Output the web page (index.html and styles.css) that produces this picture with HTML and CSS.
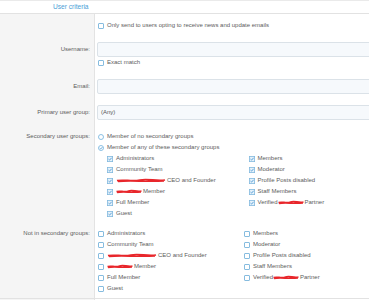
FILE: index.html
```html
<!DOCTYPE html>
<html lang="en">
<head>
    <meta charset="UTF-8">
    <title>User criteria</title>
    <link rel="stylesheet" href="styles.css">
</head>
<body>
<div class="page">
<div class="block">
    <h3 class="section-header">User criteria</h3>

    <!-- Newsletter opt-in -->
    <dl class="form-row">
        <dt></dt>
        <dd>
            <label class="check top"><span class="box"></span>Only send to users opting to receive news and update emails</label>
        </dd>
    </dl>

    <!-- Username -->
    <dl class="form-row form-row--input">
        <dt>Username:</dt>
        <dd>
            <div class="input"></div>
            <label class="check top"><span class="box"></span>Exact match</label>
        </dd>
    </dl>

    <!-- Email -->
    <dl class="form-row form-row--input">
        <dt>Email:</dt>
        <dd>
            <div class="input"></div>
        </dd>
    </dl>

    <!-- Primary group -->
    <dl class="form-row form-row--input">
        <dt>Primary user group:</dt>
        <dd>
            <div class="input select">(Any)</div>
        </dd>
    </dl>

    <!-- Secondary groups -->
    <dl class="form-row form-row--groups">
        <dt>Secondary user groups:</dt>
        <dd>
            <label class="check top">
                <svg class="radio" viewBox="0 0 6 6"><circle cx="3" cy="3" r="2.5" fill="#fff" stroke="#6fb0dc" stroke-width="0.8"/></svg>
                Member of no secondary groups
            </label>
            <label class="check top">
                <svg class="radio" viewBox="0 0 6 6"><circle cx="3" cy="3" r="2.5" fill="#fff" stroke="#6fb0dc" stroke-width="0.8"/><path d="M1.7 3.1 L2.7 4 L4.4 2.1" fill="none" stroke="#4a98d0" stroke-width="0.8"/></svg>
                Member of any of these secondary groups
            </label>
            <div class="group-list nested">
                <label class="check"><svg class="box-on" viewBox="0 0 6 6"><rect x="0.4" y="0.4" width="5.2" height="5.2" fill="#e4f1fa" stroke="#82b9de" stroke-width="0.8"/><path d="M1.5 3.1 L2.6 4.1 L4.6 1.8" fill="none" stroke="#3f8fcf" stroke-width="0.8"/></svg>Administrators</label>
                <label class="check"><svg class="box-on" viewBox="0 0 6 6"><rect x="0.4" y="0.4" width="5.2" height="5.2" fill="#e4f1fa" stroke="#82b9de" stroke-width="0.8"/><path d="M1.5 3.1 L2.6 4.1 L4.6 1.8" fill="none" stroke="#3f8fcf" stroke-width="0.8"/></svg>Members</label>
                <label class="check"><svg class="box-on" viewBox="0 0 6 6"><rect x="0.4" y="0.4" width="5.2" height="5.2" fill="#e4f1fa" stroke="#82b9de" stroke-width="0.8"/><path d="M1.5 3.1 L2.6 4.1 L4.6 1.8" fill="none" stroke="#3f8fcf" stroke-width="0.8"/></svg>Community Team</label>
                <label class="check"><svg class="box-on" viewBox="0 0 6 6"><rect x="0.4" y="0.4" width="5.2" height="5.2" fill="#e4f1fa" stroke="#82b9de" stroke-width="0.8"/><path d="M1.5 3.1 L2.6 4.1 L4.6 1.8" fill="none" stroke="#3f8fcf" stroke-width="0.8"/></svg>Moderator</label>
                <label class="check"><svg class="box-on" viewBox="0 0 6 6"><rect x="0.4" y="0.4" width="5.2" height="5.2" fill="#e4f1fa" stroke="#82b9de" stroke-width="0.8"/><path d="M1.5 3.1 L2.6 4.1 L4.6 1.8" fill="none" stroke="#3f8fcf" stroke-width="0.8"/></svg><svg class="redact redact-lg" viewBox="0 0 50 6" preserveAspectRatio="none"><path d="M1 3.2 C8 1.4 16 4.6 24 2.4 S40 4.2 49 2.4 M2 4.2 C14 2.2 30 5 48 3.4" fill="none" stroke="#e8262b" stroke-width="2"/></svg>CEO and Founder</label>
                <label class="check"><svg class="box-on" viewBox="0 0 6 6"><rect x="0.4" y="0.4" width="5.2" height="5.2" fill="#e4f1fa" stroke="#82b9de" stroke-width="0.8"/><path d="M1.5 3.1 L2.6 4.1 L4.6 1.8" fill="none" stroke="#3f8fcf" stroke-width="0.8"/></svg>Profile Posts disabled</label>
                <label class="check"><svg class="box-on" viewBox="0 0 6 6"><rect x="0.4" y="0.4" width="5.2" height="5.2" fill="#e4f1fa" stroke="#82b9de" stroke-width="0.8"/><path d="M1.5 3.1 L2.6 4.1 L4.6 1.8" fill="none" stroke="#3f8fcf" stroke-width="0.8"/></svg><svg class="redact redact-sm" viewBox="0 0 50 6" preserveAspectRatio="none"><path d="M1 3.2 C8 1.4 16 4.6 24 2.4 S40 4.2 49 2.4 M2 4.2 C14 2.2 30 5 48 3.4" fill="none" stroke="#e8262b" stroke-width="2"/></svg>Member</label>
                <label class="check"><svg class="box-on" viewBox="0 0 6 6"><rect x="0.4" y="0.4" width="5.2" height="5.2" fill="#e4f1fa" stroke="#82b9de" stroke-width="0.8"/><path d="M1.5 3.1 L2.6 4.1 L4.6 1.8" fill="none" stroke="#3f8fcf" stroke-width="0.8"/></svg>Staff Members</label>
                <label class="check"><svg class="box-on" viewBox="0 0 6 6"><rect x="0.4" y="0.4" width="5.2" height="5.2" fill="#e4f1fa" stroke="#82b9de" stroke-width="0.8"/><path d="M1.5 3.1 L2.6 4.1 L4.6 1.8" fill="none" stroke="#3f8fcf" stroke-width="0.8"/></svg>Full Member</label>
                <label class="check"><svg class="box-on" viewBox="0 0 6 6"><rect x="0.4" y="0.4" width="5.2" height="5.2" fill="#e4f1fa" stroke="#82b9de" stroke-width="0.8"/><path d="M1.5 3.1 L2.6 4.1 L4.6 1.8" fill="none" stroke="#3f8fcf" stroke-width="0.8"/></svg>Verified <svg class="redact redact-sm" viewBox="0 0 50 6" preserveAspectRatio="none"><path d="M1 3.2 C8 1.4 16 4.6 24 2.4 S40 4.2 49 2.4 M2 4.2 C14 2.2 30 5 48 3.4" fill="none" stroke="#e8262b" stroke-width="2"/></svg>Partner</label>
                <label class="check"><svg class="box-on" viewBox="0 0 6 6"><rect x="0.4" y="0.4" width="5.2" height="5.2" fill="#e4f1fa" stroke="#82b9de" stroke-width="0.8"/><path d="M1.5 3.1 L2.6 4.1 L4.6 1.8" fill="none" stroke="#3f8fcf" stroke-width="0.8"/></svg>Guest</label>
            </div>
        </dd>
    </dl>

    <!-- Not in groups -->
    <dl class="form-row form-row--last">
        <dt>Not in secondary groups:</dt>
        <dd>
            <div class="group-list">
                <label class="check"><span class="box"></span>Administrators</label>
                <label class="check"><span class="box"></span>Members</label>
                <label class="check"><span class="box"></span>Community Team</label>
                <label class="check"><span class="box"></span>Moderator</label>
                <label class="check"><span class="box"></span><svg class="redact redact-lg" viewBox="0 0 50 6" preserveAspectRatio="none"><path d="M1 3.2 C8 1.4 16 4.6 24 2.4 S40 4.2 49 2.4 M2 4.2 C14 2.2 30 5 48 3.4" fill="none" stroke="#e8262b" stroke-width="2"/></svg>CEO and Founder</label>
                <label class="check"><span class="box"></span>Profile Posts disabled</label>
                <label class="check"><span class="box"></span><svg class="redact redact-sm" viewBox="0 0 50 6" preserveAspectRatio="none"><path d="M1 3.2 C8 1.4 16 4.6 24 2.4 S40 4.2 49 2.4 M2 4.2 C14 2.2 30 5 48 3.4" fill="none" stroke="#e8262b" stroke-width="2"/></svg>Member</label>
                <label class="check"><span class="box"></span>Staff Members</label>
                <label class="check"><span class="box"></span>Full Member</label>
                <label class="check"><span class="box"></span>Verified <svg class="redact redact-sm" viewBox="0 0 50 6" preserveAspectRatio="none"><path d="M1 3.2 C8 1.4 16 4.6 24 2.4 S40 4.2 49 2.4 M2 4.2 C14 2.2 30 5 48 3.4" fill="none" stroke="#e8262b" stroke-width="2"/></svg>Partner</label>
                <label class="check"><span class="box"></span>Guest</label>
            </div>
        </dd>
    </dl>

    <dl class="form-row form-row--filler">
        <dt></dt>
        <dd></dd>
    </dl>
</div>
</div>
</body>
</html>
```

FILE: styles.css
```css
html, body {
    margin: 0;
    padding: 0;
    overflow: hidden;
}

body {
    font-family: "Liberation Sans", Arial, sans-serif;
    font-size: 6px;
    color: #5c5c5c;
    background: #fff;
}

.page {
    width: 100%;
    height: 300px;
    overflow: hidden;
}

.block {
    width: 392px;
}

.section-header {
    margin: 0;
    height: 12px;
    line-height: 12px;
    padding-left: 53px;
    border-top: 1px solid #eaeaea;
    border-bottom: 1px solid #e2e2e2;
    font-size: 6.6px;
    font-weight: normal;
    color: #4aa0d6;
}

.form-row {
    display: grid;
    grid-template-columns: 95px 1fr;
    margin: 0;
}

.form-row dt {
    background: #f5f5f5;
    border-right: 1px solid #e3e3e3;
    text-align: right;
    padding: 6px 4px 0 0;
    line-height: 11px;
}

.form-row dd {
    margin: 0;
    padding: 6px 2px 5px 2px;
}

.form-row--input dt {
    padding-top: 8px;
}

.form-row--groups dd {
    padding-bottom: 3px;
}

.form-row--last dd {
    padding-bottom: 4px;
}

.form-row--last {
    border-bottom: 1px solid #e2e2e2;
}

.form-row--filler dd {
    padding: 0;
    height: 20px;
}

.input {
    height: 13px;
    border: 1px solid #dbe2e8;
    border-radius: 2px;
    background: #f6f9fc;
}

.select {
    line-height: 13px;
    padding-left: 3px;
    color: #555;
}

.check {
    display: flex;
    align-items: center;
    height: 11px;
    line-height: 11px;
    white-space: nowrap;
}

.check.top {
    margin-left: 1px;
}

.box {
    flex: none;
    width: 4px;
    height: 4px;
    border: 1px solid #86bcdf;
    border-radius: 1px;
    background: #fff;
    margin-right: 3px;
}

.box-on,
.radio {
    flex: none;
    width: 6px;
    height: 6px;
    margin-right: 3px;
}

.group-list {
    display: grid;
    grid-template-columns: 1fr 1fr;
    margin-left: 1px;
}

.group-list.nested {
    margin-left: 10px;
}

.redact {
    flex: none;
    height: 5px;
    margin-right: 1px;
}

.redact-lg {
    width: 50px;
}

.redact-sm {
    width: 26px;
}
```
